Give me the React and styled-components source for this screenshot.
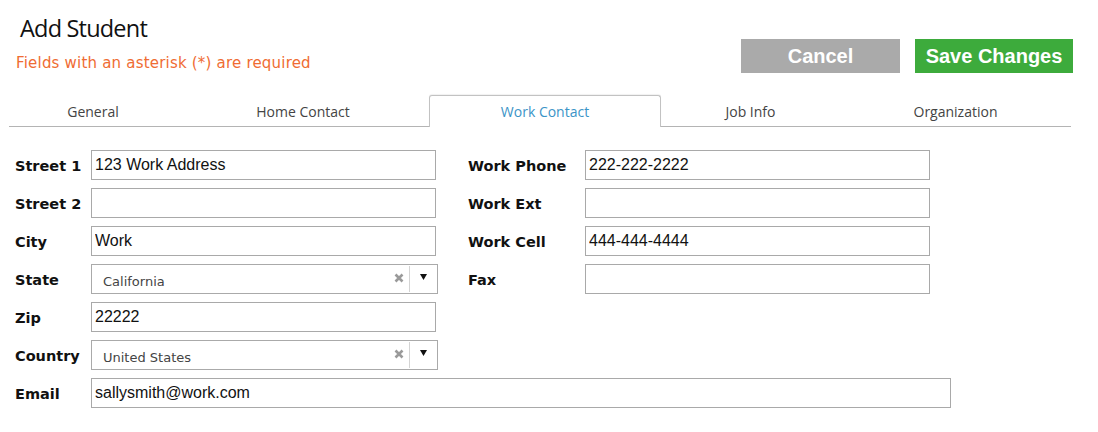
import React from "react";
import styled, { createGlobalStyle } from "styled-components";

const Global = createGlobalStyle`
  html, body { margin: 0; padding: 0; background: #fff; }
  * { box-sizing: border-box; }
`;

const Page = styled.div`
  width: 1098px;
  min-height: 432px;
  background: #fff;
`;

const Header = styled.div`
  display: flex;
  justify-content: space-between;
  align-items: flex-start;
  height: 95px;
  padding: 13px 25px 0 16px;
`;

const TitleBlock = styled.div`
  display: flex;
  flex-direction: column;
`;

const Title = styled.h1`
  margin: 0 0 0 4px;
  font-family: "Open Sans", "Noto Sans", sans-serif;
  font-weight: 400;
  font-size: 23.5px;
  line-height: 30px;
  letter-spacing: -0.8px;
  color: #111;
`;

const Subtitle = styled.div`
  margin-top: 12px;
  font-family: "DejaVu Sans", Verdana, sans-serif;
  font-size: 15px;
  line-height: 17px;
  letter-spacing: 0.2px;
  color: #ef6c33;
`;

const Buttons = styled.div`
  display: flex;
  gap: 15px;
  margin-top: 26px;
`;

const Button = styled.button`
  width: ${(p) => p.$w}px;
  height: 34px;
  border: none;
  padding: 0;
  background: ${(p) => (p.$primary ? "#3dab3c" : "#aaaaaa")};
  color: #fff;
  font-family: "Liberation Sans", Arial, sans-serif;
  font-weight: 700;
  font-size: 20px;
  cursor: pointer;
`;

const TabBar = styled.div`
  display: flex;
  margin: 0 27px 0 9px;
  height: 32px;
  border-bottom: 1px solid #b4b4b4;
`;

const Tab = styled.div`
  width: ${(p) => p.$w}px;
  height: ${(p) => (p.$active ? "32px" : "31px")};
  display: flex;
  align-items: center;
  justify-content: center;
  padding-top: ${(p) => (p.$active ? "0" : "1px")};
  font-family: "Open Sans", "Noto Sans", sans-serif;
  font-size: 14px;
  color: ${(p) => (p.$active ? "#3b94c7" : "#444")};
  background: #fff;
  ${(p) =>
    p.$active &&
    `
    border: 1px solid #c2c2c2;
    border-bottom: none;
    border-radius: 3px 3px 0 0;
    box-shadow: 0 -1px 1px rgba(0,0,0,0.06);
    position: relative;
    z-index: 1;
  `}
`;

const Form = styled.div`
  padding: 23px 0 0 15px;
`;

const Top = styled.div`
  display: flex;
  align-items: flex-start;
`;

const Col = styled.div`
  display: grid;
  grid-template-columns: ${(p) => p.$label}px ${(p) => p.$field}px;
  grid-auto-rows: 30px;
  row-gap: 8px;
  margin-left: ${(p) => p.$offset || 0}px;
`;

const EmailRow = styled.div`
  display: grid;
  grid-template-columns: 76px 860px;
  height: 30px;
  margin-top: 8px;
`;

const Label = styled.label`
  align-self: center;
  font-family: "DejaVu Sans", Verdana, sans-serif;
  font-weight: 700;
  font-size: 14.5px;
  color: #111;
  padding-top: 1px;
  white-space: nowrap;
`;

const Input = styled.input`
  width: ${(p) => p.$w || 345}px;
  height: 30px;
  border: 1px solid #a9a9a9;
  border-radius: 0;
  padding: 0 3px 1px 3px;
  font-family: "Liberation Sans", Arial, sans-serif;
  font-size: 16px;
  color: #111;
  background: #fff;
  outline: none;
`;

const SelectBox = styled.div`
  width: 347px;
  height: 30px;
  border: 1px solid #aaa;
  display: flex;
  align-items: stretch;
  background: #fff;
`;

const SelectText = styled.span`
  flex: 1;
  padding: 5px 0 0 11px;
  font-family: "DejaVu Sans", Verdana, sans-serif;
  font-size: 13px;
  color: #444;
  display: flex;
  align-items: center;
`;

const Clear = styled.span`
  width: 16px;
  display: flex;
  align-items: center;
  justify-content: center;
  padding-bottom: 2px;
  margin-right: 2px;
`;

const Sep = styled.span`
  width: 1px;
  margin: 1px 0;
  background: #d4d4d4;
`;

const Arrow = styled.span`
  width: 27px;
  display: flex;
  justify-content: center;
  padding-top: 9px;
`;

function Select({ value }) {
  return (
    <SelectBox>
      <SelectText>{value}</SelectText>
      <Clear>
        <svg width="10" height="10" viewBox="0 0 10 10">
          <path d="M1.5 1.5 L8.5 8.5 M8.5 1.5 L1.5 8.5" stroke="#9a9a9a" strokeWidth="2.6" strokeLinecap="butt" />
        </svg>
      </Clear>
      <Sep />
      <Arrow>
        <svg width="7" height="6" viewBox="0 0 7 6">
          <path d="M0 0 H7 L3.5 6 Z" fill="#111" />
        </svg>
      </Arrow>
    </SelectBox>
  );
}

const tabs = [
  { label: "General", w: 168 },
  { label: "Home Contact", w: 252 },
  { label: "Work Contact", w: 232, active: true },
  { label: "Job Info", w: 179 },
  { label: "Organization", w: 231 },
];

export default function App() {
  return (
    <Page>
      <Global />
      <Header>
        <TitleBlock>
          <Title>Add Student</Title>
          <Subtitle>Fields with an asterisk (*) are required</Subtitle>
        </TitleBlock>
        <Buttons>
          <Button $w={159}>Cancel</Button>
          <Button $w={158} $primary>
            Save Changes
          </Button>
        </Buttons>
      </Header>
      <TabBar>
        {tabs.map((t) => (
          <Tab key={t.label} $w={t.w} $active={t.active}>
            {t.label}
          </Tab>
        ))}
      </TabBar>
      <Form>
        <Top>
          <Col $label={76} $field={347}>
            <Label>Street 1</Label>
            <Input defaultValue="123 Work Address" />
            <Label>Street 2</Label>
            <Input defaultValue="" />
            <Label>City</Label>
            <Input defaultValue="Work" />
            <Label>State</Label>
            <Select value="California" />
            <Label>Zip</Label>
            <Input defaultValue="22222" />
            <Label>Country</Label>
            <Select value="United States" />
          </Col>
          <Col $label={117} $field={345} $offset={30}>
            <Label>Work Phone</Label>
            <Input defaultValue="222-222-2222" />
            <Label>Work Ext</Label>
            <Input defaultValue="" />
            <Label>Work Cell</Label>
            <Input defaultValue="444-444-4444" />
            <Label>Fax</Label>
            <Input defaultValue="" />
          </Col>
        </Top>
        <EmailRow>
          <Label>Email</Label>
          <Input $w={860} defaultValue="sallysmith@work.com" />
        </EmailRow>
      </Form>
    </Page>
  );
}
